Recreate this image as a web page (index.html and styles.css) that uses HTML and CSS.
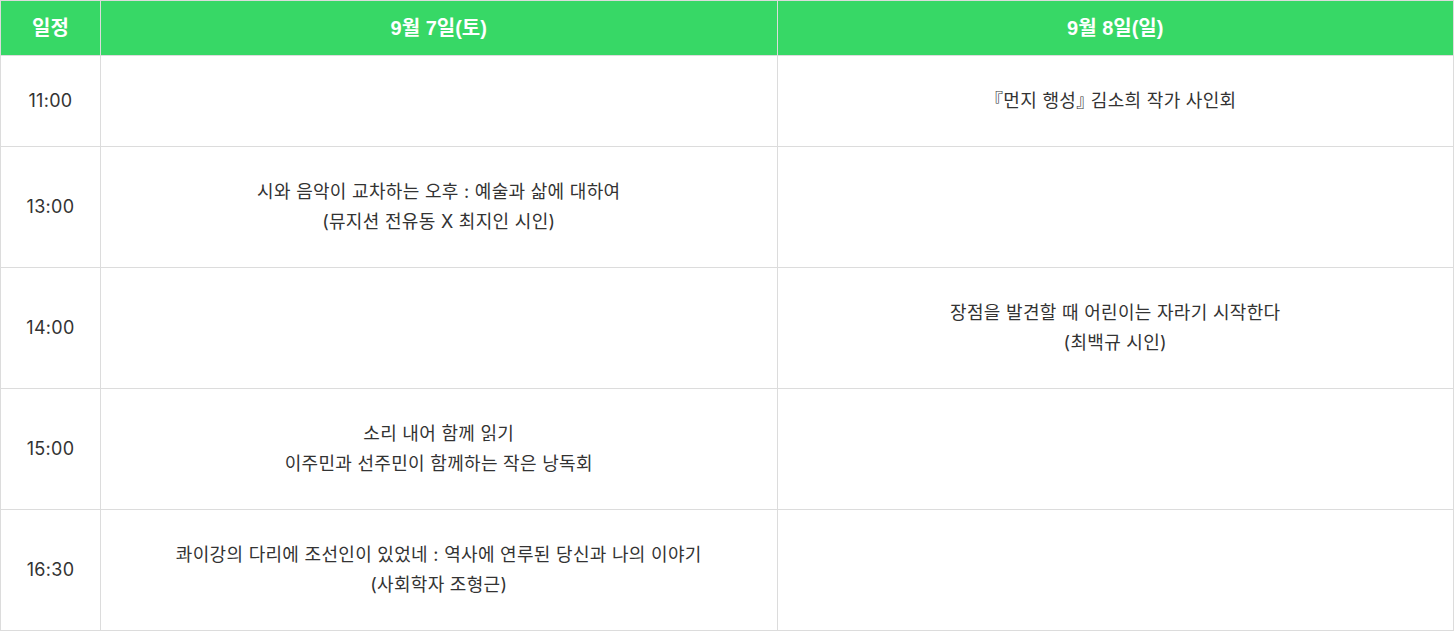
FILE: index.html
```html
<!DOCTYPE html>
<html lang="ko">
<head>
<meta charset="utf-8">
<link rel="stylesheet" href="styles.css">
</head>
<body>
<table class="schedule">
  <colgroup>
    <col class="col-time">
    <col class="col-day">
    <col class="col-day">
  </colgroup>
  <thead>
    <tr>
      <th>일정</th>
      <th>9월 7일(토)</th>
      <th>9월 8일(일)</th>
    </tr>
  </thead>
  <tbody>
    <tr>
      <td>11:00</td>
      <td></td>
      <td><span class="punct">『</span>먼지 행성<span class="punct">』</span> 김소희 작가 사인회</td>
    </tr>
    <tr>
      <td>13:00</td>
      <td>시와 음악이 교차하는 오후 : 예술과 삶에 대하여<br>(뮤지션 전유동 X 최지인 시인)</td>
      <td></td>
    </tr>
    <tr>
      <td>14:00</td>
      <td></td>
      <td>장점을 발견할 때 어린이는 자라기 시작한다<br>(최백규 시인)</td>
    </tr>
    <tr>
      <td>15:00</td>
      <td>소리 내어 함께 읽기<br>이주민과 선주민이 함께하는 작은 낭독회</td>
      <td></td>
    </tr>
    <tr>
      <td>16:30</td>
      <td>콰이강의 다리에 조선인이 있었네 : 역사에 연루된 당신과 나의 이야기<br>(사회학자 조형근)</td>
      <td></td>
    </tr>
  </tbody>
</table>
</body>
</html>
```
FILE: styles.css
```css
html, body {
  margin: 0;
  padding: 0;
  background: #fff;
}
body {
  font-family: "Inter", "Noto Sans CJK KR", sans-serif;
  color: #333;
}
.schedule {
  width: 1454px;
  border-collapse: collapse;
  table-layout: fixed;
}
.col-time { width: 100px; }
.schedule th,
.schedule td {
  border: 1px solid #dcdcdc;
  text-align: center;
  vertical-align: middle;
  font-size: 18px;
  line-height: 30px;
}
.schedule th {
  background: #37d866;
  color: #fff;
  font-family: "Liberation Sans", "Noto Sans CJK KR", sans-serif;
  font-size: 20px;
  font-weight: 700;
  padding: 12px 10px;
}
.schedule td {
  padding: 30px 10px;
  letter-spacing: 0.3px;
}
.punct {
  font-feature-settings: "halt" 1;
}
```
